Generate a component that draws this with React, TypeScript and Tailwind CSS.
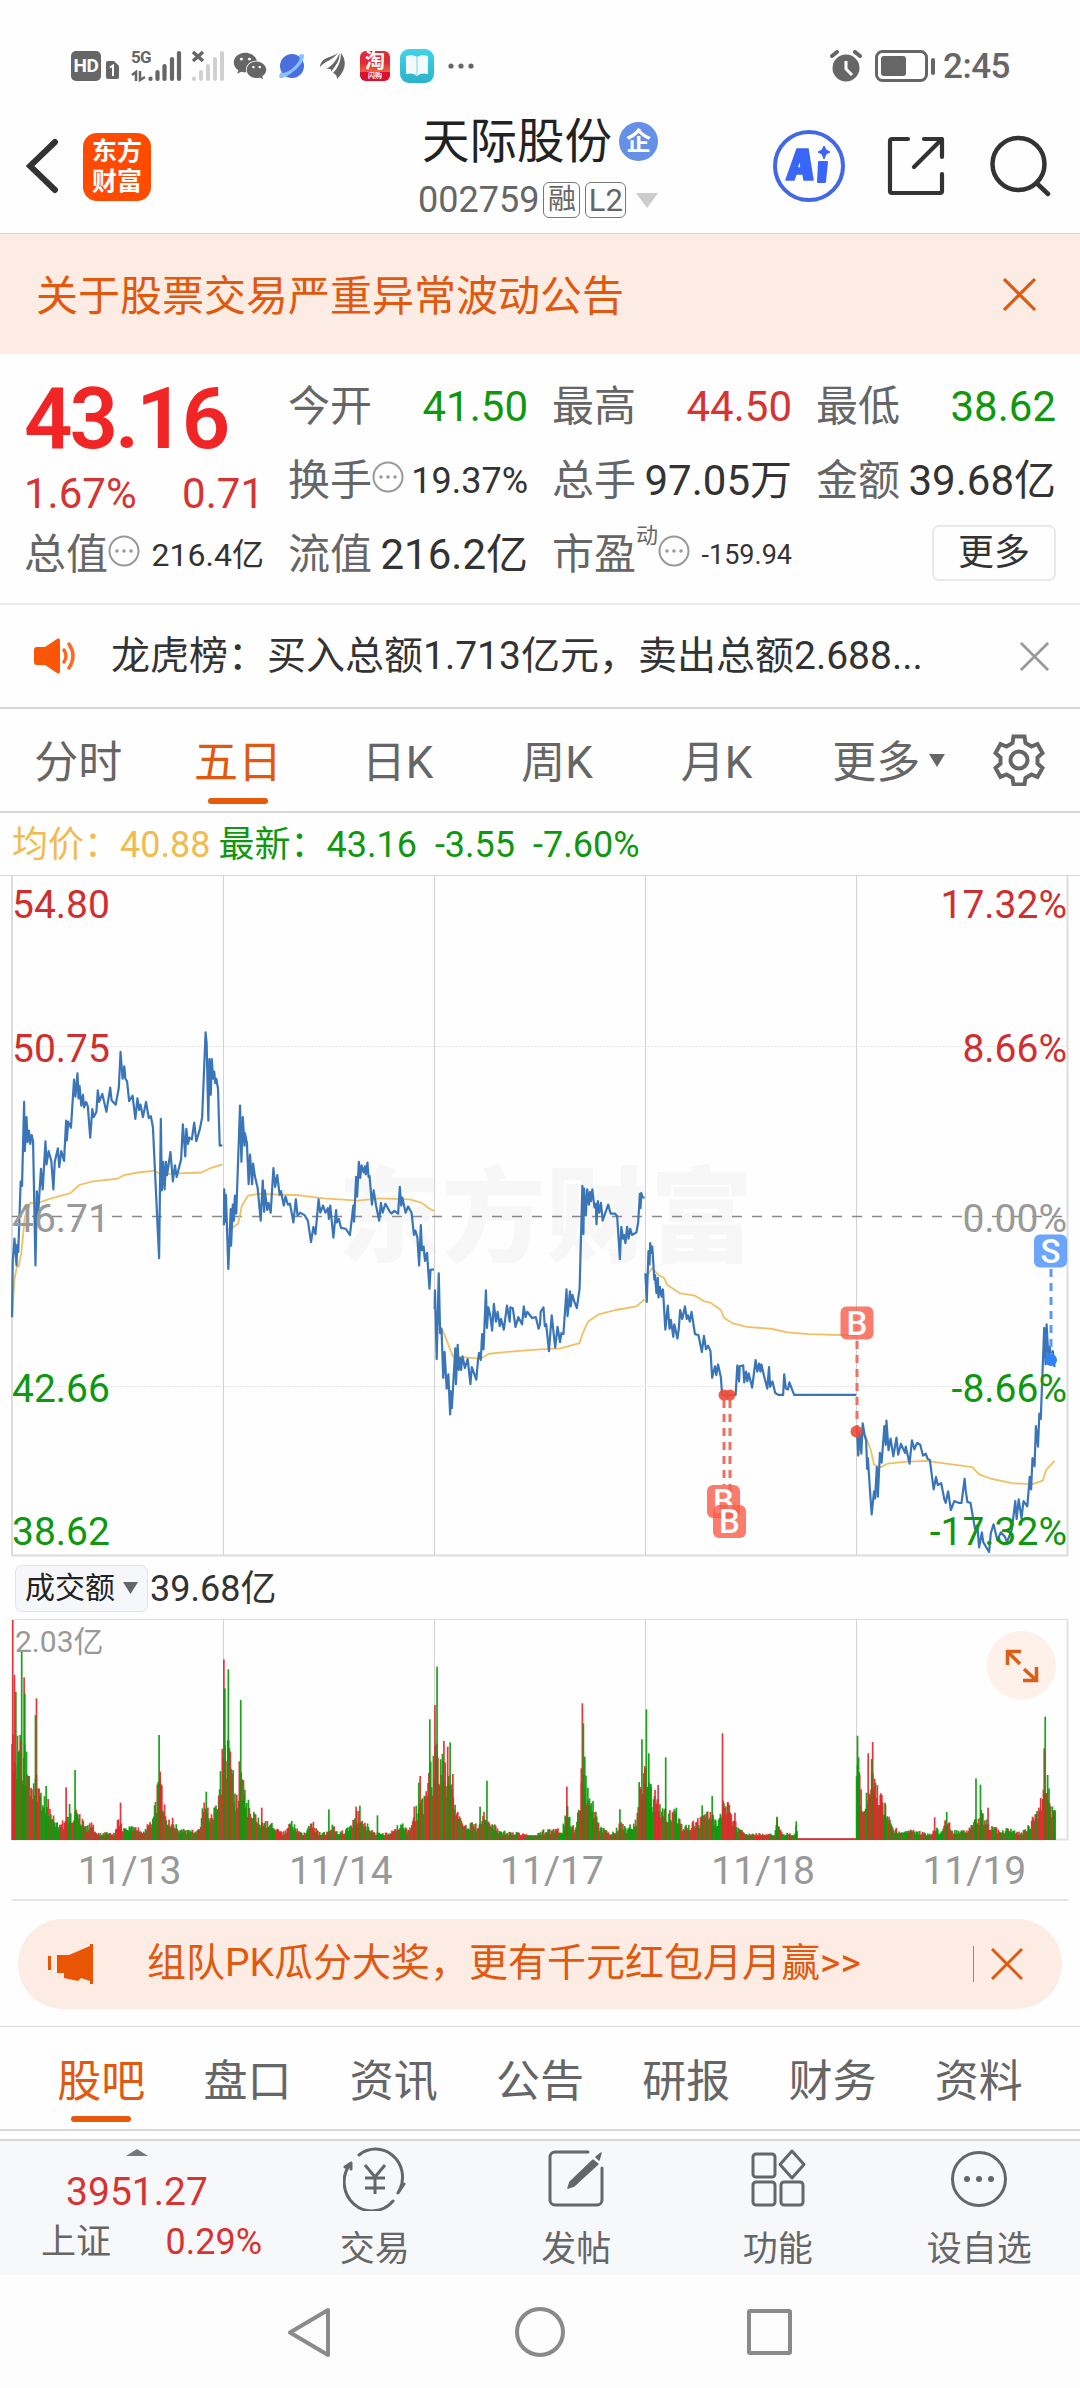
import type { ReactNode } from 'react'
import { FaWeixin } from 'react-icons/fa'

const DAYS = ['11/13', '11/14', '11/17', '11/18', '11/19']

// intraday traces, one per trading day
const PRICE = [
  '35,1024 37,900 42,848 48,908 50,862 53,878 60,720 64,730 70,542 72,652 77,576 80,632 84,606 88,636 92,616 96,630 103,908 107,742 110,802 119,692 124,738 132,630 135,682 141,652 149,674 155,738 159,676 168,646 172,688 178,652 186,674 192,584 194,628 198,586 206,600 215,492 219,530 225,478 228,534 231,506 236,550 241,526 244,554 250,542 255,552 262,622 268,558 272,576 280,564 284,516 288,542 297,524 309,564 320,510 324,538 336,548 345,510 350,430 356,490 361,462 364,490 369,496 375,540 385,528 393,580 399,534 404,560 408,548 415,576 424,542 432,578 438,574 444,598 462,892 467,580 470,740 474,676 478,738 482,676 485,706 495,654 502,720 508,684 513,710 526,670 531,592 538,664 541,602 546,636 550,622 557,626 564,588 570,630 580,604 587,576 597,386 600,410 605,584 608,446 612,526 615,446 619,490 622,474 625,500 628,490 633,512 638,640 646,639',
  '650,818 651,738 654,810 656,750 663,916 670,782 671,864 676,772 679,808 682,752 686,792 697,550 701,676 705,576 710,640 711,612 717,634 722,726 726,660 732,726 735,680 740,708 748,734 757,808 763,718 767,788 769,740 776,784 780,768 786,790 794,690 799,732 805,706 812,750 816,742 824,774 829,754 836,772 842,770 852,812 859,760 864,796 872,790 885,796 894,808 903,856 910,822 916,838 925,760 930,790 938,774 945,790 952,780 955,804 959,774 968,846 976,784 978,812 984,804 990,824 1004,826 1016,840 1026,774 1028,810 1034,710 1037,754 1042,676 1046,712 1050,684 1056,700 1060,686 1062,704 1067,678 1070,710 1073,708 1080,772 1085,740 1092,774 1101,808 1106,768 1111,790 1119,770 1132,788 1137,792 1145,786 1156,792 1161,732 1165,774 1168,756 1178,790 1185,776 1195,790 1202,840 1206,830 1212,846 1217,908 1222,818 1225,874 1230,866 1234,898 1240,880 1247,960 1250,918 1260,917',
  '1262,1006 1263,964 1268,1118 1274,926 1278,1060 1282,1050 1287,1160 1291,1102 1297,1184 1302,1152 1307,1242 1309,1190 1312,1228 1322,1094 1324,1174 1329,1086 1332,1142 1336,1116 1339,1142 1343,1112 1350,1138 1358,1118 1366,1174 1370,1136 1383,1164 1388,1120 1391,1104 1396,1120 1400,1062 1404,1096 1411,964 1414,1048 1418,1002 1424,1022 1429,1054 1434,994 1440,1034 1445,1012 1451,1044 1455,1028 1463,1052 1472,998 1480,1034 1482,1002 1489,1004 1497,1046 1505,1024 1516,1040 1521,1000 1526,1024 1531,1012 1545,1026 1556,1024 1564,1050 1568,1040 1570,1012 1578,1002 1582,1044 1586,1040 1594,1100 1602,1020 1612,1092 1619,1046 1626,1080 1630,1060 1636,1062 1645,962 1648,1022 1655,966 1657,1000 1662,974 1668,990 1675,1004 1683,960 1691,730 1694,838 1696,736 1701,796 1705,738 1710,772 1713,744 1716,764 1720,738 1726,778 1730,770 1732,816 1736,764 1740,790 1745,768 1750,808 1758,790 1766,772 1773,792 1786,792 1792,798 1800,894 1804,822 1809,848 1812,840 1816,858 1821,822 1825,848 1830,826 1835,840 1848,834 1853,812 1858,748 1860,780 1862,746 1866,756 1872,756',
  '1874,926 1878,990 1883,876 1886,906 1888,858 1892,880 1894,866 1900,940 1902,930 1906,970 1910,936 1912,980 1916,956 1921,978 1925,962 1932,1052 1939,998 1944,1050 1948,1030 1955,1068 1958,1040 1967,1072 1971,1050 1975,1008 1981,1028 1989,1000 1994,1028 1998,1020 2003,1034 2008,1012 2018,1062 2028,1064 2038,1102 2044,1066 2050,1096 2056,1088 2063,1100 2068,1160 2076,1134 2080,1154 2085,1130 2093,1158 2097,1198 2136,1198 2141,1132 2146,1168 2148,1134 2158,1132 2161,1170 2166,1146 2170,1168 2174,1150 2184,1182 2194,1120 2199,1146 2204,1128 2208,1146 2211,1130 2218,1154 2228,1184 2233,1136 2236,1180 2243,1168 2251,1194 2260,1198 2274,1198 2277,1152 2282,1184 2288,1186 2292,1170 2306,1198 2486,1198',
  '2488,1270 2492,1334 2497,1280 2501,1330 2505,1262 2511,1290 2515,1300 2518,1364 2520,1340 2526,1410 2531,1466 2538,1414 2541,1430 2546,1360 2549,1426 2555,1328 2560,1350 2568,1268 2572,1310 2574,1256 2580,1322 2586,1296 2594,1336 2603,1294 2608,1332 2616,1308 2628,1328 2630,1314 2641,1352 2648,1300 2655,1320 2663,1306 2672,1310 2680,1334 2688,1330 2694,1342 2700,1344 2711,1410 2718,1382 2723,1400 2733,1396 2742,1432 2746,1440 2753,1414 2761,1456 2771,1436 2783,1440 2792,1440 2801,1386 2804,1412 2809,1438 2818,1440 2831,1498 2838,1490 2843,1540 2851,1506 2855,1528 2872,1550 2877,1508 2885,1488 2896,1524 2906,1506 2918,1516 2924,1528 2938,1500 2948,1436 2952,1476 2958,1432 2966,1474 2972,1436 2983,1448 2990,1382 2994,1410 2998,1340 3004,1358 3008,1268 3014,1314 3018,1240 3022,1252 3032,1048 3036,1130 3039,1040 3044,1110 3048,1090 3054,1130 3057,1100 3062,1136',
]

const AVERAGE = [
  '35,1024 42,940 48,914 54,910 62,880 72,800 88,768 110,768 150,758 205,746 230,728 270,720 340,714 360,706 400,700 450,696 465,704 520,702 585,700 605,692 646,682',
  '655,830 670,826 692,814 702,775 720,752 750,748 870,751 940,758 1040,763 1100,758 1190,760 1225,768 1245,780 1260,786',
  '1262,1010 1275,1040 1290,1062 1315,1112 1350,1114 1395,1117 1420,1106 1500,1100 1568,1096 1628,1094 1683,1082 1692,1060 1708,1034 1738,1018 1788,1008 1848,1000 1872,984',
  '1876,935 1893,914 1913,930 1928,936 1938,952 1973,970 2018,976 2043,988 2063,992 2093,1008 2103,1026 2128,1038 2168,1046 2238,1050 2288,1058 2348,1062 2438,1064 2486,1064',
  '2488,1285 2513,1290 2528,1320 2538,1355 2558,1360 2578,1352 2628,1348 2688,1346 2748,1352 2823,1360 2843,1376 2878,1386 2938,1396 2998,1398 3028,1390 3038,1366 3062,1346',
]

// turnover level through the five days: x, height
const VOLUME = '34,300 48,270 60,260 75,240 85,210 95,150 104,240 112,130 125,110 140,110 160,50 185,50 205,70 215,90 235,60 250,35 265,50 280,20 315,20 335,20 345,70 355,30 390,40 420,25 440,60 455,130 465,180 475,100 490,50 500,60 520,30 545,25 580,30 590,110 600,100 615,70 630,100 640,200 650,250 665,260 680,160 690,100 700,170 715,120 730,80 750,60 790,45 820,20 850,50 865,25 890,20 905,55 925,20 955,25 965,40 985,20 1015,35 1040,80 1060,50 1085,20 1130,20 1165,45 1190,30 1205,80 1220,110 1235,110 1250,190 1270,270 1290,200 1310,150 1325,90 1345,50 1390,40 1410,80 1430,50 1450,25 1510,20 1550,10 1568,25 1608,30 1633,30 1646,80 1668,30 1683,90 1693,250 1708,110 1723,90 1743,35 1783,20 1803,50 1818,30 1848,60 1858,180 1873,220 1883,220 1893,120 1913,110 1928,80 1943,80 1963,80 1978,40 1998,40 2038,60 2068,80 2083,40 2098,110 2113,100 2128,60 2148,30 2178,15 2218,20 2248,15 2258,60 2273,20 2303,15 2313,40 2316,4 2485,4 2488,240 2498,150 2508,90 2523,150 2533,180 2553,120 2573,100 2588,40 2618,20 2643,30 2698,15 2718,35 2733,20 2748,60 2768,25 2808,25 2838,60 2853,70 2878,40 2908,25 2933,35 2968,20 2993,50 3013,90 3028,120 3038,200 3048,110 3062,85'
  .split(' ')
  .map((p) => p.split(',').map(Number))

const UP = '#e3262b'
const DOWN = '#0a9a0a'

const RED_SPIKES = '37,660 42,495 70,488 106,425 192,158 465,205 350,112 650,542 669,265 695,236 760,97 1034,100 1203,100 1220,192 1263,405 1289,297 1300,280 1315,198 1646,160 1688,215 1691,410 1872,222 1911,165 1902,150 2098,320 2114,113 2134,82 2496,195 2521,260 2534,294 2539,160 2556,135 2714,68 2849,90 2869,97 3032,275 3048,110'
const GREEN_SPIKES = '46,445 63,565 72,440 103,375 134,162 218,210 202,108 462,315 599,145 653,455 663,512 699,420 707,180 955,92 1045,103 1096,74 1216,172 1248,362 1269,520 1307,293 1394,100 1414,178 1648,102 1694,350 1698,250 1707,157 1722,117 1800,92 1864,302 1877,392 1884,260 1890,168 1933,248 1964,97 2039,104 2068,132 2256,70 2312,56 2490,313 2493,248 2531,243 2570,112 2749,84 2834,185 2847,166 3035,370 3042,195 3046,155 3061,90'

function noise(n: number) {
  const v = Math.sin(n * 12.9898) * 43758.5453
  return v - Math.floor(v)
}

function volumeBars() {
  const bars: { x: number; h: number; color: string }[] = []
  let seg = 0
  for (let x = 35; x < 3064; x += 2.62) {
    while (seg < VOLUME.length - 2 && VOLUME[seg + 1][0] < x) seg++
    const [x0, h0] = VOLUME[seg]
    const [x1, h1] = VOLUME[seg + 1]
    const level = h0 + ((h1 - h0) * (x - x0)) / (x1 - x0)
    const flat = x > 2316 && x < 2486
    const h = flat ? 5 : Math.max(14, level * (0.62 + 0.6 * noise(x)))
    const color = flat || noise(x * 3.7) > 0.52 ? UP : DOWN
    bars.push({ x, h, color })
  }
  return bars
}

const spikes = (list: string, color: string) =>
  list.split(' ').map((p) => {
    const [x, h] = p.split(',').map(Number)
    return { x, h, color }
  })

const BARS = [...volumeBars(), ...spikes(RED_SPIKES, UP), ...spikes(GREEN_SPIKES, DOWN)]

function Close({ size, color }: { size: number; color: string }) {
  return (
    <svg width={size} height={size} viewBox="0 0 32 32" stroke={color} strokeWidth="3">
      <path d="M1 1 31 31M31 1 1 31" />
    </svg>
  )
}

function Dots() {
  return (
    <svg width="32" height="32" viewBox="0 0 32 32" className="relative -top-1 shrink-0">
      <circle cx="16" cy="16" r="14.5" fill="none" stroke="#999" strokeWidth="2" />
      <circle cx="9" cy="16" r="1.8" fill="#999" />
      <circle cx="16" cy="16" r="1.8" fill="#999" />
      <circle cx="23" cy="16" r="1.8" fill="#999" />
    </svg>
  )
}

function StatusBar() {
  return (
    <div className="flex h-[100px] items-center pt-8 pl-[71px] pr-[70px] text-[#666]">
      <div className="flex h-[30px] w-[30px] items-center justify-center rounded-[5px] bg-[#666] text-[19px] font-bold tracking-tight text-white">HD</div>
      <svg width="13" height="18" viewBox="0 0 13 18" className="ml-[5px] mt-2">
        <path d="M2 0h6l5 5v11a2 2 0 0 1-2 2H2a2 2 0 0 1-2-2V2a2 2 0 0 1 2-2z" fill="#666" />
        <path d="M4 6.500 7 4.500V15" fill="none" stroke="#fff" strokeWidth="2" />
      </svg>
      <div className="relative ml-3 h-[32px] w-[52px]">
        <span className="absolute -top-[1px] left-0 text-[17px] leading-[17px] font-bold tracking-tighter">5G</span>
        <svg width="52" height="32" viewBox="0 0 52 32" className="absolute top-0 left-0">
          <path d="M1 25 5 22v9M9 21v9l5-3" fill="none" stroke="#666" strokeWidth="2.500" />
          <path d="M19.500 28.500v.5M26.500 22v7M33.500 16v13M41 9v20M48 3v26" stroke="#666" strokeWidth="4.200" strokeLinecap="round" />
        </svg>
      </div>
      <svg width="36" height="32" viewBox="0 0 36 32" className="ml-2">
        <path d="M2 2l10 9M12 2 2 11" stroke="#666" strokeWidth="3.500" />
        <path d="M3 28.500v.5M10 22v7M17 16v13M24 9v20M31 3v26" stroke="#d0d0d0" strokeWidth="4" strokeLinecap="round" />
      </svg>
      <FaWeixin className="ml-[6px]" size={34} />
      <svg width="28" height="28" viewBox="0 0 28 28" className="ml-[11px]">
        <circle cx="14" cy="14" r="12" fill="#4a70e0" />
        <path d="M21 3c3-2 5-1 5 1 0 5-5 11-10 15S5 27 2 26c-2-1 0-5 2-7 0 2 1 2 2 2 3-1 7-3 11-7s6-8 4-11z" fill="#8ac2fb" />
      </svg>
      <svg width="26" height="28" viewBox="0 0 26 28" className="ml-[14px]" fill="#666">
        <path d="M0 15C1 5 11 6 18 1 12 9 6 8 0 15zM6 17C12 14 17 8 19.500 1 20 9 16 13 11 20c1-3-1-4-5-3zM17 27c0-3-1-5-4-6C18 16 21 9 21 1c6 8 5 17-4 26z" />
      </svg>
      <div className="ml-[14px] flex h-[30px] w-[30px] flex-col items-center justify-between rounded-[6px] bg-linear-to-b from-[#e02a35] from-40% to-[#f58a4a] text-white">
        <span className="text-[20px] leading-[21px] font-bold">淘</span>
        <span className="w-full rounded-b-[6px] bg-[#dc0f2e] text-center text-[7px] leading-[9px] font-bold">闪购</span>
      </div>
      <svg width="34" height="34" viewBox="0 0 34 34" className="ml-[10px]">
        <defs>
          <linearGradient id="reader" x1="0" y1="0" x2="0" y2="1">
            <stop offset="0" stopColor="#41d3e8" />
            <stop offset="1" stopColor="#2bb2cb" />
          </linearGradient>
        </defs>
        <rect width="34" height="34" rx="9" fill="url(#reader)" />
        <path d="M6 7c4-1 8-1 11 1 3-2 7-2 11-1v18c-4-1-8-1-11 2-3-3-7-3-11-2z" fill="#f2fbff" />
        <path d="M17 8v18" stroke="#a8deec" strokeWidth="1.500" />
      </svg>
      <svg width="26" height="6" viewBox="0 0 26 6" className="ml-[14px]" fill="#666">
        <circle cx="3" cy="3" r="2.600" /><circle cx="13" cy="3" r="2.600" /><circle cx="23" cy="3" r="2.600" />
      </svg>
      <div className="ml-auto flex items-center">
        <svg width="32" height="32" viewBox="0 0 32 32">
          <circle cx="16" cy="18" r="13.500" fill="#666" />
          <path d="M2 6 7 2M25 2l5 4" stroke="#666" strokeWidth="4" strokeLinecap="round" />
          <path d="M16 11v8l6 6" fill="none" stroke="#fff" strokeWidth="3" />
        </svg>
        <svg width="61" height="32" viewBox="0 0 61 32" className="ml-[13px]">
          <rect x="1.500" y="1.500" width="50" height="29" rx="6" fill="none" stroke="#666" strokeWidth="3" />
          <rect x="6" y="6" width="25" height="20" rx="3" fill="#666" />
          <path d="M58 10v13" stroke="#666" strokeWidth="4" strokeLinecap="round" />
        </svg>
        <span className="ml-[7px] text-[35px] leading-none font-medium tracking-[-0.5px]">2:45</span>
      </div>
    </div>
  )
}

function Header() {
  return (
    <header className="flex h-[134px] items-center border-b border-[#d5d7db] pr-[29px] pl-[26px]">
      <svg width="33" height="56" viewBox="0 0 33 56" className="-mt-0.5" fill="none" stroke="#333" strokeWidth="6" strokeLinecap="round">
        <path d="M29 4 4 28l25 24" />
      </svg>
      <div className="ml-6 grid h-[68px] w-[68px] place-content-center rounded-[14px] bg-[#ff4a02] text-center text-[25px] leading-[30px] font-bold text-white">
        <div>东方</div>
        <div>财富</div>
      </div>
      <div className="ml-[267px] w-[242px] pt-[9px]">
        <div className="flex h-[54px] items-center pl-[4px] text-[47.500px] leading-none text-[#222]">
          天际股份
          <span className="-mt-1 ml-[7px] grid h-[39px] w-[39px] place-content-center rounded-full bg-[#6690e6] text-[25px] leading-none font-bold text-white">企</span>
        </div>
        <div className="mt-1 flex h-[52px] items-center text-[36px] leading-none text-[#666]">
          002759
          <span className="ml-1 grid h-[36px] w-[37px] place-content-center rounded-[6px] border border-[#777] text-[28px] leading-none">融</span>
          <span className="ml-[5px] grid h-[36px] w-[41px] place-content-center rounded-[6px] border border-[#777] text-[31px] leading-none">L2</span>
          <svg width="22" height="15" viewBox="0 0 22 15" className="ml-[10px] shrink-0"><path d="M0 0h22L11 15z" fill="#ccc" /></svg>
        </div>
      </div>
      <div className="-mt-0.5 ml-auto flex items-center">
        <svg width="72" height="74" viewBox="0 0 72 74">
          <circle cx="36" cy="37" r="34" fill="none" stroke="#4268e6" strokeWidth="4" />
          <path d="M24 20h11l5 31h-9l-1-6h-7l-2 6h-8zM27 30l-3 9h4z" fill="#3a66f8" stroke="#3a66f8" strokeWidth="1.500" strokeLinejoin="round" fillRule="evenodd" />
          <path d="M46 33h8l-2 20h-7z" fill="#3a66f8" stroke="#3a66f8" strokeWidth="2" strokeLinejoin="round" />
          <path d="M51 17l2 4 4 2-4 2-2 5-2-5-4-2 4-2z" fill="#3a66f8" stroke="#3a66f8" />
        </svg>
        <svg width="58" height="60" viewBox="0 0 58 60" className="ml-[42px]" fill="none" stroke="#333" strokeWidth="4.200" strokeLinecap="round" strokeLinejoin="round">
          <path d="M21 3H5a2 2 0 0 0-2 2v50a2 2 0 0 0 2 2h48a2 2 0 0 0 2-2V38M37 3h18v18M54 4 27 31" />
        </svg>
        <svg width="62" height="62" viewBox="0 0 62 62" className="ml-[44px]" fill="none" stroke="#333" strokeWidth="4.500" strokeLinecap="round">
          <circle cx="29.500" cy="29" r="26" />
          <path d="M47.500 48 59 59" />
        </svg>
      </div>
    </header>
  )
}

function Stat({ label, value, className, children }: { label: string; value: string; className: string; children?: ReactNode }) {
  return (
    <div className="flex h-[74px] items-center whitespace-nowrap">
      <span className="text-[42px] text-[#666]">{label}</span>
      {children}
      <span className={`ml-auto ${className}`}>{value}</span>
    </div>
  )
}

function Quote() {
  return (
    <section className="grid h-[249px] grid-cols-4 grid-rows-[74px_74px_74px] content-start gap-x-6 px-6 pt-[16px] leading-none">
      <div className="row-span-2 h-[148px] whitespace-nowrap text-[#f12525]">
        <div className="pt-[7px] text-[85px] leading-[84px] font-semibold tracking-[-3px]">43.16</div>
        <div className="mt-[12px] flex justify-between text-[42px] text-[#d63333]">
          <span>1.67%</span>
          <span>0.71</span>
        </div>
      </div>
      <Stat label="今开" value="41.50" className="text-[42px] text-[#0f970f]" />
      <Stat label="最高" value="44.50" className="text-[42px] text-[#d63333]" />
      <Stat label="最低" value="38.62" className="text-[42px] text-[#0f970f]" />
      <Stat label="换手" value="19.37%" className="text-[36px] text-[#333]"><Dots /></Stat>
      <Stat label="总手" value="97.05万" className="text-[42px] text-[#333]" />
      <Stat label="金额" value="39.68亿" className="text-[42px] text-[#333]" />
      <Stat label="总值" value="216.4亿" className="text-[32px] text-[#333]"><Dots /></Stat>
      <Stat label="流值" value="216.2亿" className="text-[42px] text-[#333]" />
      <Stat label="市盈" value="-159.94" className="text-[27px] text-[#333]">
        <span className="relative -top-[19px] text-[22px] text-[#666]">动</span>
        <Dots />
      </Stat>
      <div className="flex h-[74px] items-center justify-end">
        <div className="relative -top-0.5 grid h-[56px] w-[124px] place-content-center rounded-[7px] border-2 border-[#e9e9e9] text-[36px] text-[#333]">更多</div>
      </div>
    </section>
  )
}

function Notice() {
  return (
    <div className="flex h-[106px] items-center border-t-2 border-b-2 border-t-[#ebebeb] border-b-[#d8d8d8] pr-[31px] pl-[34px]">
      <svg width="44" height="36" viewBox="0 0 44 36">
        <path d="M3 9h8L23 1q3-2 3 2v30q0 4-3 2l-12-8H3q-3 0-3-3V12q0-3 3-3z" fill="#fb5607" />
        <path d="M30 12q4 6 0 12M35 6q8 12 0 24" fill="none" stroke="#fb6a23" strokeWidth="3.500" strokeLinecap="round" />
      </svg>
      <span className="ml-[33px] text-[39px] leading-none whitespace-nowrap text-[#333]">龙虎榜：买入总额1.713亿元，卖出总额2.688...</span>
      <div className="ml-auto"><Close size={29} color="#999" /></div>
    </div>
  )
}

function PeriodTabs() {
  const tabs = ['分时', '五日', '日K', '周K', '月K', '更多']
  return (
    <nav className="flex h-[104px] items-center border-b-2 border-[#d8d8d8] text-[44px] leading-none text-[#666]">
      {tabs.map((tab, i) => (
        <div key={tab} className={`relative flex h-full w-[159.600px] items-center justify-center pt-1.5 pr-[3px] ${i === 1 ? 'text-[#e0590f]' : ''}`}>
          {tab}
          {i === 1 && <span className="absolute bottom-[7px] h-[6px] w-[60px] rounded-full bg-[#e65a0a]" />}
          {i === 5 && <svg width="16" height="13" viewBox="0 0 16 13" className="absolute right-[13px] bottom-[44px]"><path d="M0 0h16L8 13z" fill="#666" /></svg>}
        </div>
      ))}
      <svg width="52" height="52" viewBox="0 0 52 52" className="ml-[35px]" fill="none" stroke="#666" strokeWidth="4">
        <path d="M20.500 2.500h11l1 6.500 6 3.500 6-2.500 5 9-5 4.500v6l5 4.500-5 9-6-2.500-6 3.500-1 6.500h-11l-1-6.500-6-3.500-6 2.500-5-9 5-4.500v-6l-5-4.500 5-9 6 2.500 6-3.500z" />
        <circle cx="26" cy="26" r="8.500" />
      </svg>
    </nav>
  )
}

function Marker({ x, y, label, color }: { x: number; y: number; label: string; color: string }) {
  return (
    <g>
      <rect x={x - 16.500} y={y - 16.500} width="33" height="33" rx="6" fill={color} fillOpacity="0.82" />
      <text x={x} y={y + 11.500} textAnchor="middle" fontSize="33" fontWeight="500" fill="#fff">{label}</text>
    </g>
  )
}

function PriceChart() {
  const rows = [
    { y: 904, left: '54.80', right: '17.32%', color: '#cf2f2f' },
    { y: 1048, left: '50.75', right: '8.66%', color: '#cf2f2f' },
    { y: 1218, left: '46.71', right: '0.00%', color: '#999' },
    { y: 1388, left: '42.66', right: '-8.66%', color: '#0f970f' },
    { y: 1531, left: '38.62', right: '-17.32%', color: '#0f970f' },
  ]
  return (
    <svg width="1080" height="682" viewBox="0 875 1080 682" className="block" fontFamily='Roboto, "Noto Sans CJK SC", sans-serif'>
      <text x="338" y="1254" fontSize="103" fontWeight="900" letterSpacing="1" fill="#f7f7f7">东方财富</text>
      <path d="M0 875.500H1080" stroke="#d8d8d8" />
      <path d="M12 1555.500H1068M12 876V1556M1067.500 876V1556" stroke="#dcdcdc" strokeWidth="2" fill="none" />
      <path d="M223.500 876V1555M434.500 876V1555M645.500 876V1555M856.500 876V1555" stroke="#d2d2d2" />
      <path d="M12 1046.500H1068M12 1386.500H1068" stroke="#ddd" strokeDasharray="1.500 1.500" />
      <path d="M12 1216.500H1068" stroke="#888" strokeWidth="1.500" strokeDasharray="10 10" />
      <g transform="translate(0 860) scale(0.34439 0.44643)" fill="none" strokeLinejoin="round">
        {AVERAGE.map((d, i) => <polyline key={i} points={d} stroke="#eec166" strokeWidth="1.800" vectorEffect="non-scaling-stroke" />)}
        {PRICE.map((d, i) => <polyline key={i} points={d} stroke="#3a75b8" strokeWidth="2.200" vectorEffect="non-scaling-stroke" />)}
      </g>
      {rows.map((r) => (
        <g key={r.left} fontSize="39" fill={r.color}>
          <text x="12" y={r.y + 14}>{r.left}</text>
          <text x="1067" y={r.y + 14} textAnchor="end">{r.right}</text>
        </g>
      ))}
      <g stroke="#ee6f63" strokeWidth="3" strokeDasharray="8 6" fill="none">
        <path d="M724 1400V1485M730 1400V1500M857 1341V1426" />
      </g>
      <path d="M1051 1269V1355" stroke="#5b9af0" strokeWidth="3" strokeDasharray="8 6" />
      <g fill="#f04a3a" fillOpacity="0.9">
        <circle cx="724" cy="1395" r="5.500" /><circle cx="730" cy="1395" r="5.500" /><circle cx="856.500" cy="1431.500" r="6" />
      </g>
      <circle cx="1051" cy="1360" r="6" fill="#2f84f5" />
      <Marker x={723.500} y={1501.500} label="B" color="#f95f4c" />
      <Marker x={729.500} y={1521.500} label="B" color="#f95f4c" />
      <Marker x={857} y={1323} label="B" color="#f95f4c" />
      <Marker x={1050.500} y={1251} label="S" color="#4b92fa" />
    </svg>
  )
}

function VolumeChart() {
  return (
    <section>
      <div className="flex h-[62px] items-center pl-[15px] leading-none text-[#333]">
        <div className="flex h-[47px] w-[133px] items-center justify-between rounded-[7px] border border-[#e0e3e8] bg-[#f6f7fa] px-[9px] text-[30px] text-[#222]">
          成交额
          <svg width="15" height="12" viewBox="0 0 15 12"><path d="M0 0h15L7.500 12z" fill="#666" /></svg>
        </div>
        <span className="ml-[2px] pt-0.5 text-[36px]">39.68亿</span>
      </div>
      <div className="relative">
        <svg width="1080" height="222" viewBox="0 1619 1080 222" className="block" fontFamily='Roboto, "Noto Sans CJK SC", sans-serif'>
          <path d="M12 1619.500H1068" stroke="#ddd" />
          <path d="M1067.500 1619V1840M12 1839.500H1068" stroke="#e2e2e2" strokeWidth="2" />
          <path d="M223.500 1619V1840M434.500 1619V1840M645.500 1619V1840M856.500 1619V1840" stroke="#d2d2d2" />
          {BARS.map((b, i) => (
            <rect key={i} x={b.x * 0.34439 - 0.850} y={1840 - b.h / 3} width="1.700" height={b.h / 3} fill={b.color} fillOpacity="0.92" />
          ))}
          <text x="15" y="1652" fontSize="30" fill="#999">2.03亿</text>
        </svg>
        <div className="absolute top-[12px] right-[24px] grid h-[69px] w-[69px] place-content-center rounded-full bg-[#fdf1ea]">
          <svg width="34" height="34" viewBox="0 0 34 34" fill="none" stroke="#da5e17" strokeWidth="3.500">
            <path d="M2.500 16V2.500H16M3 3l12 12M31.500 18v13.500H18M31 31 19 20" />
          </svg>
        </div>
      </div>
      <div className="mx-3 flex h-[60px] items-center border-b-2 border-[#e4e4e4] pt-[3px] pl-3 text-[39px] leading-none text-[#999]">
        {DAYS.map((d) => <span key={d} className="w-[211.200px] shrink-0 text-center">{d}</span>)}
      </div>
    </section>
  )
}

function Promo() {
  return (
    <div className="flex h-[126px] items-center border-b border-[#d8d8d8] px-[18px]">
      <div className="flex h-[90px] w-full items-center rounded-full bg-[#fcece3] pr-[39px] pl-[29px] text-[#e0590f]">
        <svg width="47" height="40" viewBox="0 0 47 40" fill="#ea5504">
          <path d="M1 12h3v14H1zM10 11h12L43 2V0h3v40h-3v-3l-9-3-3 3-14-3v-5h-7z" />
        </svg>
        <span className="ml-[53px] text-[39px] leading-none whitespace-nowrap">组队PK瓜分大奖，更有千元红包月月赢&gt;&gt;</span>
        <span className="ml-auto h-9 w-px bg-[#d9743c]" />
        <span className="ml-[17px]"><Close size={32} color="#e0590f" /></span>
      </div>
    </div>
  )
}

function SectionTabs() {
  const tabs = ['股吧', '盘口', '资讯', '公告', '研报', '财务', '资料']
  return (
    <nav className="grid h-[104px] grid-cols-7 border-b-2 border-[#d8d8d8] px-7 text-[44px] leading-none text-[#666]">
      {tabs.map((tab, i) => (
        <div key={tab} className={`relative flex items-center justify-center pt-2 ${i === 0 ? 'text-[#e0590f]' : ''}`}>
          {tab}
          {i === 0 && <span className="absolute bottom-[7px] h-[6px] w-[60px] rounded-full bg-[#e65a0a]" />}
        </div>
      ))}
    </nav>
  )
}

function Action({ label, children }: { label: string; children: ReactNode }) {
  return (
    <div className="flex w-[201.500px] flex-col items-center pt-[6px] text-[35px] leading-none text-[#666]">
      <svg width="64" height="64" viewBox="0 0 64 64" fill="none" stroke="#666" strokeWidth="3" strokeLinecap="round" strokeLinejoin="round">
        {children}
      </svg>
      <span className="mt-[21px]">{label}</span>
    </div>
  )
}

function BottomBar() {
  return (
    <footer className="flex h-[136px] border-t-2 border-[#d5d7db] bg-[#f7f8fa]">
      <div className="flex w-[274px] flex-col items-center pt-[8px] leading-none text-[#d63333]">
        <svg width="22" height="7" viewBox="0 0 22 7"><path d="M11 0 22 7H0z" fill="#777" /></svg>
        <span className="mt-[17px] text-[39px]">3951.27</span>
        <div className="mt-[12px] flex w-full items-center justify-between pr-[12px] pl-[41px] text-[36px]">
          <span className="text-[35px] text-[#666]">上证</span>
          <span>0.29%</span>
        </div>
      </div>
      <Action label="交易">
        <path d="M16 8a27 28 0 0 1 41 34l-2 4 6-9M50 54A27 28 0 0 1 8 16l-6 4M8 16v6" />
        <path d="M22 18l10 12 10-12M22 31h20M22 41h20M32 30v17" strokeLinecap="butt" />
      </Action>
      <Action label="发帖">
        <path d="M44 5H11a5 5 0 0 0-5 5v43a5 5 0 0 0 5 5h42a5 5 0 0 0 5-5V21" />
        <path d="M52 10l5-4-2 7zM49 13l5 4-24 22-6 2 2-6z" fill="#666" strokeWidth="1.500" />
      </Action>
      <Action label="功能">
        <rect x="7" y="7" width="22" height="23" rx="3" />
        <rect x="7" y="35" width="22" height="23" rx="3" />
        <rect x="35" y="35" width="22" height="23" rx="3" />
        <path d="M46 4 58 17.500 46 31 34 17.500z" />
      </Action>
      <Action label="设自选">
        <circle cx="32" cy="32" r="26.500" />
        <g fill="#666" stroke="none">
          <circle cx="20" cy="32" r="3" /><circle cx="32" cy="32" r="3" /><circle cx="44" cy="32" r="3" />
        </g>
      </Action>
    </footer>
  )
}

function SystemNav() {
  return (
    <div className="flex h-[112px] items-center bg-[#fcfcfc] pt-[1px] pl-[286px]">
      <svg width="506" height="52" viewBox="0 0 506 52" fill="none" stroke="#8a8a8a" strokeWidth="4" strokeLinejoin="round">
        <path d="M42 4v45L4 26.500z" />
        <circle cx="254" cy="26" r="23" />
        <rect x="463" y="5" width="41" height="42" rx="1" />
      </svg>
    </div>
  )
}

export default function App() {
  return (
    <div lang="zh-CN" className="h-[2388px] w-[1080px] overflow-hidden bg-[#fefefe] font-['Roboto','Noto_Sans_CJK_SC',sans-serif]">
      <StatusBar />
      <Header />
      <div className="flex h-[120px] items-center justify-between bg-[#fcece3] pr-[44px] pl-[36px] text-[42px] leading-none text-[#e0590f]">
        <span className="pt-1.5">关于股票交易严重异常波动公告</span>
        <Close size={33} color="#e0590f" />
      </div>
      <Quote />
      <Notice />
      <PeriodTabs />
      <div className="flex h-[62px] items-center pl-3 pt-[2px] text-[36px] leading-none whitespace-pre text-[#0f970f]">
        <span className="text-[#f0bb50]">均价：40.88</span>
        <span className="ml-[8px]">最新：43.16</span>
        <span className="ml-[18px]">-3.55</span>
        <span className="ml-[18px]">-7.60%</span>
      </div>
      <PriceChart />
      <VolumeChart />
      <Promo />
      <SectionTabs />
      <div className="h-2" />
      <BottomBar />
      <SystemNav />
    </div>
  )
}
